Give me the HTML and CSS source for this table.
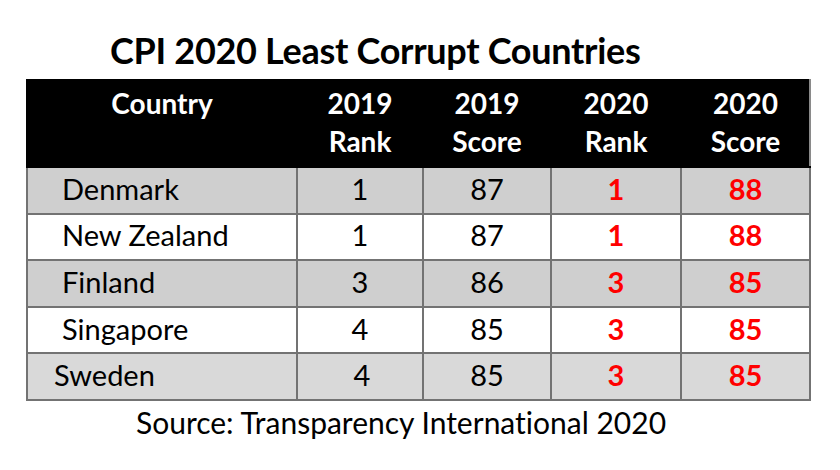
FILE: index.html
```html
<!DOCTYPE html>
<html lang="en">
<head>
<meta charset="utf-8">
<title>CPI 2020 Least Corrupt Countries</title>
<link rel="stylesheet" href="styles.css">
</head>
<body>
<div class="page">
  <h1 class="title">CPI 2020 Least Corrupt Countries</h1>
  <table class="cpi">
    <colgroup>
      <col class="c-country">
      <col class="c-num">
      <col class="c-num">
      <col class="c-num">
      <col class="c-num">
    </colgroup>
    <thead>
      <tr>
        <th class="h-country">Country</th>
        <th>2019<br>Rank</th>
        <th>2019<br>Score</th>
        <th>2020<br>Rank</th>
        <th>2020<br>Score</th>
      </tr>
    </thead>
    <tbody>
      <tr class="shade">
        <td class="country">Denmark</td><td>1</td><td>87</td><td class="hot">1</td><td class="hot">88</td>
      </tr>
      <tr>
        <td class="country">New Zealand</td><td>1</td><td>87</td><td class="hot">1</td><td class="hot">88</td>
      </tr>
      <tr class="shade">
        <td class="country">Finland</td><td>3</td><td>86</td><td class="hot">3</td><td class="hot">85</td>
      </tr>
      <tr>
        <td class="country">Singapore</td><td>4</td><td>85</td><td class="hot">3</td><td class="hot">85</td>
      </tr>
      <tr class="shade-light">
        <td class="country country-tight">Sweden</td><td class="nudge">4</td><td>85</td><td class="hot">3</td><td class="hot">85</td>
      </tr>
    </tbody>
  </table>
  <p class="source">Source: Transparency International 2020</p>
</div>
</body>
</html>
```
FILE: styles.css
```css
html, body {
  margin: 0;
  padding: 0;
  background: #ffffff;
}

body {
  font-family: "Lato", "Open Sans", "DejaVu Sans", sans-serif;
  font-variant-ligatures: none;
  color: #000000;
}

.page {
  width: 840px;
  height: 470px;
  display: flex;
  flex-direction: column;
  padding: 0 0 0 26px;
  box-sizing: border-box;
}

.title {
  margin: 0;
  padding: 30px 0 0 84px;
  height: 49px;
  font-size: 36px;
  font-weight: 700;
  line-height: 40px;
  letter-spacing: -0.3px;
}

.cpi {
  border-collapse: collapse;
  width: 783px;
  table-layout: fixed;
  font-size: 29px;
}

.c-country { width: 270px; }
.c-num:nth-child(2) { width: 126px; }
.c-num:nth-child(3) { width: 128px; }
.c-num:nth-child(4) { width: 130px; }
.c-num:nth-child(5) { width: 129px; }

.cpi thead th {
  background: #000000;
  color: #ffffff;
  font-size: 28px;
  font-weight: 700;
  height: 82px;
  padding: 3px 0 0 0;
  line-height: 38px;
  text-align: center;
  vertical-align: top;
  border: 2px solid #000000;
}

.cpi thead th:last-child {
  border-right: 2px solid #8a8a8a;
}

.cpi td {
  border: 2px solid #737373;
  height: 41.6px;
  padding: 0 0 3px 0;
  text-align: center;
  vertical-align: middle;
  line-height: 34px;
  background: #ffffff;
}

.cpi tr.shade td { background: #cfcfcf; }
.cpi tr.shade-light td { background: #d9d9d9; }

.cpi td.country {
  text-align: left;
  padding-left: 34px;
}

.cpi td.country-tight {
  padding-left: 26px;
}

.cpi td.nudge {
  padding-left: 4px;
}

.cpi td.hot {
  color: #ff0000;
  font-weight: 700;
}

.source {
  margin: 0;
  padding: 4px 0 0 110px;
  font-size: 30px;
  line-height: 34px;
}
```
